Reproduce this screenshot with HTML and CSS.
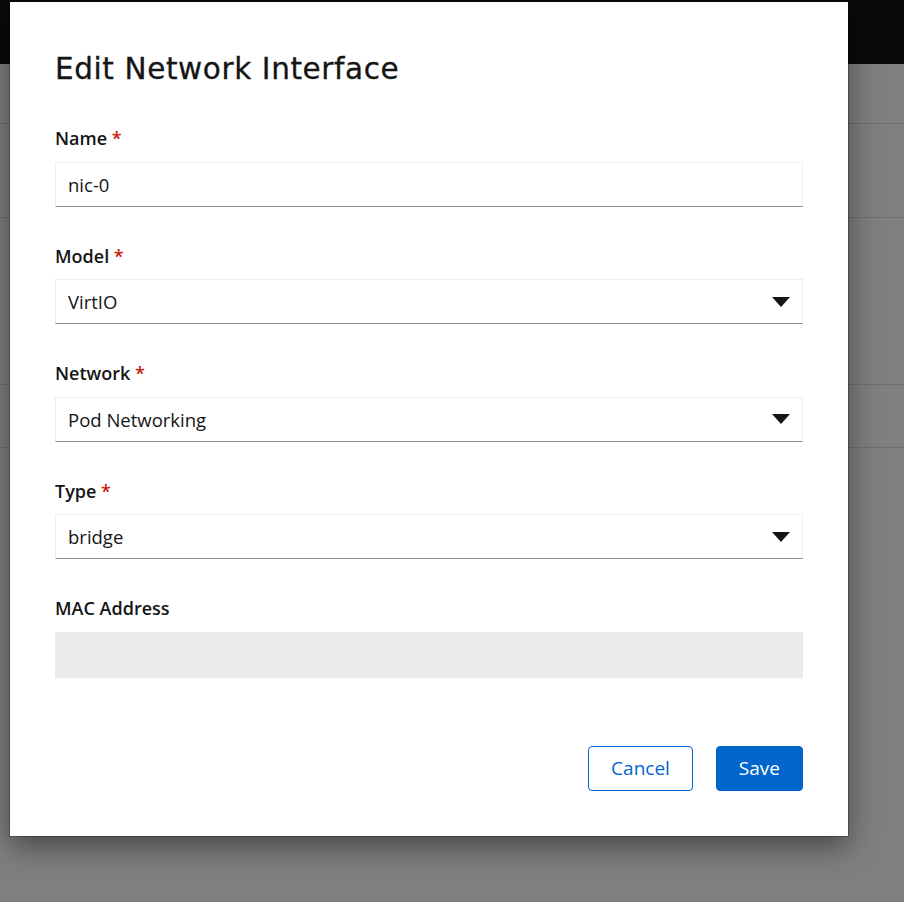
FILE: index.html
```html
<!DOCTYPE html>
<html>
<head>
<meta charset="utf-8">
<link rel="stylesheet" href="styles.css">
</head>
<body>
<div class="page">
  <div class="masthead"></div>
  <div class="row row-a"></div>
  <div class="row row-b"></div>
  <div class="row row-c"></div>
  <div class="row row-d"></div>
</div>
<div class="backdrop">
  <div class="modal">
    <h1 class="title">Edit Network Interface</h1>
    <form class="form">
      <div class="group">
        <label class="label">Name <span class="req">*</span></label>
        <div class="control"><span class="value">nic-0</span></div>
      </div>
      <div class="group">
        <label class="label">Model <span class="req">*</span></label>
        <div class="control select"><span class="value">VirtIO</span>
          <svg class="caret" width="18" height="10" viewBox="0 0 18 10"><polygon points="0,0 18,0 9,10" fill="#151515"/></svg>
        </div>
      </div>
      <div class="group">
        <label class="label">Network <span class="req">*</span></label>
        <div class="control select"><span class="value">Pod Networking</span>
          <svg class="caret" width="18" height="10" viewBox="0 0 18 10"><polygon points="0,0 18,0 9,10" fill="#151515"/></svg>
        </div>
      </div>
      <div class="group">
        <label class="label">Type <span class="req">*</span></label>
        <div class="control select"><span class="value">bridge</span>
          <svg class="caret" width="18" height="10" viewBox="0 0 18 10"><polygon points="0,0 18,0 9,10" fill="#151515"/></svg>
        </div>
      </div>
      <div class="group last">
        <label class="label">MAC Address</label>
        <div class="control disabled"></div>
      </div>
      <div class="actions">
        <button type="button" class="btn btn-secondary">Cancel</button>
        <button type="button" class="btn btn-primary">Save</button>
      </div>
    </form>
  </div>
</div>
</body>
</html>
```

FILE: styles.css
```css
* { box-sizing: border-box; }
html, body { margin: 0; padding: 0; }
body {
  width: 904px;
  height: 902px;
  overflow: hidden;
  font-family: "Open Sans", "Liberation Sans", sans-serif;
  background: #fff;
  position: relative;
}
.page { display: flex; flex-direction: column; }
.masthead { height: 64px; background: #151515; }
.row { border-bottom: 1px solid #dcdcdc; }
.row-a { height: 60px; }
.row-b { height: 94px; }
.row-c { height: 167px; }
.row-d { height: 63px; }

.backdrop {
  position: absolute;
  inset: 0;
  background: rgba(0, 0, 0, 0.5);
}
.modal {
  position: absolute;
  left: 10px;
  top: 2px;
  width: 838px;
  background: #fff;
  padding: 47px 45px 45px;
  box-shadow: 0 0 0 1px rgba(0,0,0,0.25), 0 10px 28px rgba(0,0,0,0.45);
}
.title {
  margin: 0 0 37px;
  font-family: "DejaVu Sans", "Open Sans", sans-serif;
  font-weight: 400;
  font-size: 29.5px;
  line-height: 40px;
  letter-spacing: 0.6px;
  color: #151515;
  -webkit-text-stroke: 0.3px #151515;
}
.form { display: flex; flex-direction: column; }
.group { display: flex; flex-direction: column; gap: 11.5px; margin-bottom: 37px; }
.group.last { margin-bottom: 68px; }
.label {
  font-weight: 600;
  font-size: 18px;
  line-height: 24px;
  color: #151515;
}
.req { color: #c9190b; }
.control {
  height: 45px;
  display: flex;
  align-items: center;
  padding: 0 12px 0 12px;
  border: 1px solid #ededed;
  border-bottom-color: #8a8d90;
  font-size: 18.5px;
  color: #151515;
}
.control.select { justify-content: space-between; }
.caret { display: block; }
.control.disabled { background: #ebebeb; border-color: #ebebeb; height: 46px; }

.actions { display: flex; justify-content: flex-end; gap: 23px; }
.btn {
  height: 45px;
  padding: 0 22px;
  border-radius: 4px;
  font-family: "Open Sans", "Liberation Sans", sans-serif;
  font-size: 19px;
  cursor: pointer;
}
.btn-secondary { background: #fff; color: #0066cc; border: 1px solid #0066cc; }
.btn-primary { background: #0066cc; color: #fff; border: 1px solid #0066cc; }
```
